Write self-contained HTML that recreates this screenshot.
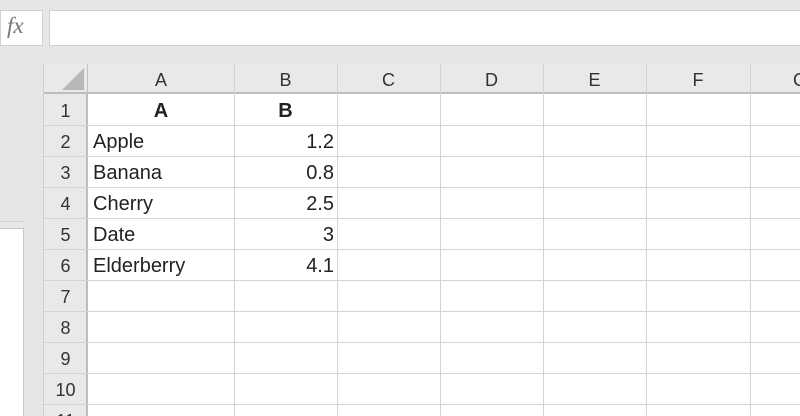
<!DOCTYPE html>
<html><head><style>
html,body{margin:0;width:800px;height:416px;overflow:hidden;}
body{background:#e6e6e6;position:relative;font-family:"Liberation Sans",sans-serif;}
div{position:absolute;box-sizing:border-box;}
.t{font-size:20px;color:#222;line-height:31px;white-space:nowrap;}
.h{font-size:18px;color:#333;text-align:center;line-height:30px;}
.v{background:#d4d4d4;width:1px;}
.hl{background:#d4d4d4;height:1px;}
</style></head><body>
<div style="left:0;top:10px;width:43px;height:36px;background:#fff;border:1px solid #d0d0d0;"></div>
<div style="left:7px;top:13px;font-family:'Liberation Serif',serif;font-style:italic;font-size:23px;color:#777;">fx</div>
<div style="left:49px;top:10px;width:760px;height:36px;background:#fff;border:1px solid #d0d0d0;"></div>
<div style="left:0;top:228px;width:24px;height:188px;background:#fff;border:1px solid #c8c8c8;border-left:none;border-bottom:none;"></div>
<div style="left:0;top:221px;width:24px;height:1px;background:#d0d0d0;"></div>
<div style="left:43px;top:64px;width:757px;height:30px;background:#e9e9e9;border-bottom:2px solid #bdbdbd;"></div>
<div style="left:43px;top:94px;width:45px;height:322px;background:#e9e9e9;border-right:2px solid #bdbdbd;"></div>
<div style="left:43px;top:64px;width:1px;height:352px;background:#cfcfcf;"></div>
<svg style="position:absolute;left:62px;top:68px" width="22" height="22"><polygon points="22,0 22,22 0,22" fill="#b8b8b8"/></svg>
<div style="left:88px;top:94px;width:712px;height:322px;background:#fff;"></div>
<div class="v" style="left:87px;top:64px;height:30px;background:#c4c4c4"></div>
<div class="v" style="left:234px;top:64px;height:352px"></div>
<div class="v" style="left:337px;top:64px;height:352px"></div>
<div class="v" style="left:440px;top:64px;height:352px"></div>
<div class="v" style="left:543px;top:64px;height:352px"></div>
<div class="v" style="left:646px;top:64px;height:352px"></div>
<div class="v" style="left:750px;top:64px;height:352px"></div>
<div class="hl" style="left:43px;top:125px;width:757px"></div>
<div class="hl" style="left:43px;top:156px;width:757px"></div>
<div class="hl" style="left:43px;top:187px;width:757px"></div>
<div class="hl" style="left:43px;top:218px;width:757px"></div>
<div class="hl" style="left:43px;top:249px;width:757px"></div>
<div class="hl" style="left:43px;top:280px;width:757px"></div>
<div class="hl" style="left:43px;top:311px;width:757px"></div>
<div class="hl" style="left:43px;top:342px;width:757px"></div>
<div class="hl" style="left:43px;top:373px;width:757px"></div>
<div class="hl" style="left:43px;top:404px;width:757px"></div>
<div class="h" style="left:88px;top:65px;width:146px">A</div>
<div class="h" style="left:234px;top:65px;width:103px">B</div>
<div class="h" style="left:337px;top:65px;width:103px">C</div>
<div class="h" style="left:440px;top:65px;width:103px">D</div>
<div class="h" style="left:543px;top:65px;width:103px">E</div>
<div class="h" style="left:646px;top:65px;width:104px">F</div>
<div class="h" style="left:750px;top:65px;width:50px;overflow:hidden;text-align:left;padding-left:43px">G</div>
<div class="h" style="left:43px;top:96px;width:45px;line-height:31px">1</div>
<div class="h" style="left:43px;top:127px;width:45px;line-height:31px">2</div>
<div class="h" style="left:43px;top:158px;width:45px;line-height:31px">3</div>
<div class="h" style="left:43px;top:189px;width:45px;line-height:31px">4</div>
<div class="h" style="left:43px;top:220px;width:45px;line-height:31px">5</div>
<div class="h" style="left:43px;top:251px;width:45px;line-height:31px">6</div>
<div class="h" style="left:43px;top:282px;width:45px;line-height:31px">7</div>
<div class="h" style="left:43px;top:313px;width:45px;line-height:31px">8</div>
<div class="h" style="left:43px;top:344px;width:45px;line-height:31px">9</div>
<div class="h" style="left:43px;top:375px;width:45px;line-height:31px">10</div>
<div class="h" style="left:43px;top:406px;width:45px;line-height:31px;height:10px;overflow:hidden">11</div>
<div class="t" style="left:88px;top:96px;width:146px;text-align:center;font-weight:bold">A</div>
<div class="t" style="left:234px;top:96px;width:103px;text-align:center;font-weight:bold">B</div>
<div class="t" style="left:93px;top:127px">Apple</div>
<div class="t" style="left:93px;top:158px">Banana</div>
<div class="t" style="left:93px;top:189px">Cherry</div>
<div class="t" style="left:93px;top:220px">Date</div>
<div class="t" style="left:93px;top:251px">Elderberry</div>
<div class="t" style="left:234px;top:127px;width:100px;text-align:right">1.2</div>
<div class="t" style="left:234px;top:158px;width:100px;text-align:right">0.8</div>
<div class="t" style="left:234px;top:189px;width:100px;text-align:right">2.5</div>
<div class="t" style="left:234px;top:220px;width:100px;text-align:right">3</div>
<div class="t" style="left:234px;top:251px;width:100px;text-align:right">4.1</div>
</body></html>
